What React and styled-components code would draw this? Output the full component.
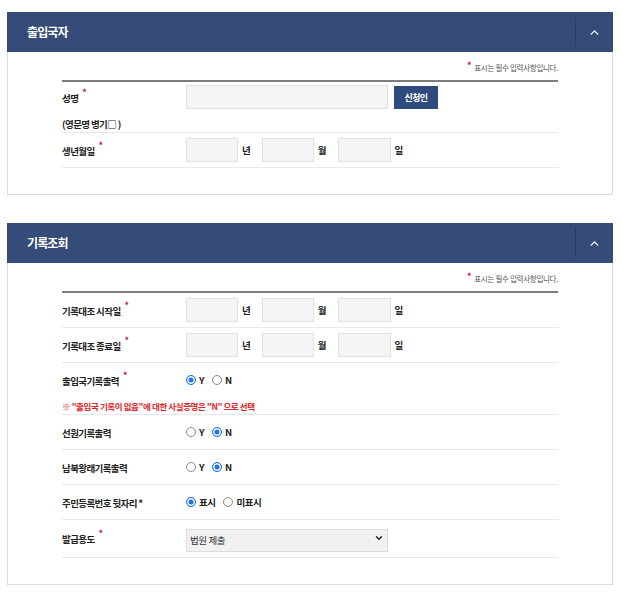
import React from "react";
import styled, { createGlobalStyle } from "styled-components";
import { ChevronUp, ChevronDown } from "lucide-react";

const GlobalStyle = createGlobalStyle`
  * { box-sizing: border-box; }
  html, body { margin: 0; padding: 0; background: #fff; }
  body {
    font-family: "Noto Sans CJK KR", "Noto Sans", sans-serif;
    color: #333;
  }
`;

const Page = styled.div`
  padding: 12px 9px 0 7px;
  display: flex;
  flex-direction: column;
  gap: 28px;
`;

const Panel = styled.section`
  width: 606px;
`;

const Header = styled.div`
  height: 40px;
  background: #354b78;
  display: flex;
  align-items: center;
  justify-content: space-between;
`;

const Title = styled.h2`
  margin: 0;
  padding-left: 20px;
  font-size: 12px;
  font-weight: 700;
  color: #fff;
  letter-spacing: -0.9px;
  line-height: 1;
`;

const Toggle = styled.button`
  width: 38px;
  height: 30px;
  border: none;
  border-left: 1px solid rgba(0, 0, 0, 0.16);
  background: transparent;
  display: flex;
  align-items: center;
  justify-content: center;
  color: #fff;
  padding: 0;
  cursor: pointer;
`;

const Body = styled.div`
  border: 1px solid #dcdcdc;
  border-top: none;
  padding: 4px 54px 26px;
`;

const Note = styled.p`
  margin: 0 0 4px;
  height: 20px;
  line-height: 20px;
  text-align: right;
  font-size: 7.5px;
  color: #555;
  letter-spacing: -0.3px;
`;

const NoteMark = styled.span`
  color: #c8102e;
  font-size: 9px;
  font-weight: 700;
  vertical-align: 2px;
  margin-right: 3px;
`;

const Table = styled.div`
  border-top: 2px solid #7d7d7d;
`;

const Row = styled.div`
  display: grid;
  grid-template-columns: 124px 1fr;
  align-items: center;
  padding: 5px 0;
  min-height: 35px;
  border-bottom: 1px solid #e9e9e9;
`;

const NameRow = styled(Row)`
  grid-template-rows: 24px 23px;
  padding: 3px 0 0;
  min-height: 51px;
`;

const NoticeRow = styled(Row)`
  grid-template-rows: 24px auto;
  padding-bottom: 0;
`;

const Label = styled.div`
  font-size: 9.5px;
  font-weight: 700;
  letter-spacing: -0.6px;
  color: #222;
  line-height: 16px;
  padding-top: 2px;
  white-space: nowrap;
`;

const SubLabel = styled(Label)`
  grid-column: 1 / -1;
  align-self: end;
  padding-top: 0;
`;

const Req = styled.span`
  color: #c8102e;
  font-size: 9px;
  margin-left: 4px;
  vertical-align: 6px;
  line-height: 0;
`;

const Field = styled.div`
  display: flex;
  align-items: center;
`;

const TextInput = styled.input`
  width: ${(p) => p.$w}px;
  height: 24px;
  border: 1px solid #e1e1e1;
  background: #f5f5f5;
  padding: 0 6px;
  font-family: inherit;
  font-size: 9px;
  outline: none;
`;

const SmallButton = styled.button`
  margin-left: 6px;
  width: 44px;
  height: 23px;
  background: #2f4a7c;
  color: #fff;
  border: none;
  font-family: inherit;
  font-size: 9px;
  font-weight: 700;
  letter-spacing: -0.6px;
  padding: 0;
  cursor: pointer;
`;

const Unit = styled.span`
  margin: 0 11px 0 4px;
  font-size: 9.5px;
  font-weight: 700;
  color: #222;
`;

const RadioGroup = styled.div`
  display: flex;
  align-items: center;
  gap: 8px;
`;

const RadioLabel = styled.label`
  display: inline-flex;
  align-items: center;
  gap: 3px;
  font-size: 9.5px;
  font-weight: 700;
  letter-spacing: -0.5px;
  color: #222;
  cursor: pointer;
`;

const RadioInput = styled.input.attrs({ type: "radio" })`
  appearance: none;
  margin: 0;
  width: 10px;
  height: 10px;
  border-radius: 50%;
  border: 1px solid #8a8a8a;
  background: #fff;
  &:checked {
    border-color: #1a73e8;
    background: #1a73e8;
    box-shadow: inset 0 0 0 1.5px #fff;
  }
`;

const SelectWrap = styled.div`
  position: relative;
  width: 202px;
`;

const Select = styled.select`
  appearance: none;
  width: 100%;
  height: 23px;
  border: 1px solid #dcdcdc;
  background: #f1f1f1;
  font-family: inherit;
  font-size: 9.5px;
  letter-spacing: -0.4px;
  color: #333;
  padding: 0 20px 0 3px;
  outline: none;
`;

const SelectIcon = styled(ChevronDown)`
  position: absolute;
  right: 4px;
  top: 50%;
  transform: translateY(-50%);
  pointer-events: none;
`;

const Notice = styled.p`
  grid-column: 1 / -1;
  margin: 6px 0 0;
  font-size: 8.5px;
  font-weight: 700;
  color: #e0262b;
  line-height: 16px;
  letter-spacing: -0.4px;
`;

function PanelHeader({ title }) {
  return (
    <Header>
      <Title>{title}</Title>
      <Toggle aria-label="접기">
        <ChevronUp size={13} strokeWidth={2.4} />
      </Toggle>
    </Header>
  );
}

function RequiredNote() {
  return (
    <Note>
      <NoteMark>*</NoteMark>표시는 필수 입력사항입니다.
    </Note>
  );
}

function DateFields() {
  return (
    <Field>
      <TextInput $w={52} />
      <Unit>년</Unit>
      <TextInput $w={52} />
      <Unit>월</Unit>
      <TextInput $w={53} />
      <Unit>일</Unit>
    </Field>
  );
}

function Radios({ name, options, checked }) {
  return (
    <RadioGroup>
      {options.map((o) => (
        <RadioLabel key={o}>
          <RadioInput name={name} defaultChecked={o === checked} />
          {o}
        </RadioLabel>
      ))}
    </RadioGroup>
  );
}

export default function App() {
  return (
    <>
      <GlobalStyle />
      <Page>
        <Panel>
          <PanelHeader title="출입국자" />
          <Body>
            <RequiredNote />
            <Table>
              <NameRow>
                <Label>
                  성명<Req>*</Req>
                </Label>
                <Field>
                  <TextInput $w={202} />
                  <SmallButton>신청인</SmallButton>
                </Field>
                <SubLabel>(영문명 병기□ )</SubLabel>
              </NameRow>
              <Row>
                <Label>
                  생년월일<Req>*</Req>
                </Label>
                <DateFields />
              </Row>
            </Table>
          </Body>
        </Panel>

        <Panel>
          <PanelHeader title="기록조회" />
          <Body>
            <RequiredNote />
            <Table>
              <Row>
                <Label>
                  기록대조 시작일<Req>*</Req>
                </Label>
                <DateFields />
              </Row>
              <Row>
                <Label>
                  기록대조 종료일<Req>*</Req>
                </Label>
                <DateFields />
              </Row>
              <NoticeRow>
                <Label>
                  출입국기록출력<Req>*</Req>
                </Label>
                <Radios name="immig" options={["Y", "N"]} checked="Y" />
                <Notice>※ "출입국 기록이 없음"에 대한 사실증명은 "N" 으로 선택</Notice>
              </NoticeRow>
              <Row>
                <Label>선원기록출력</Label>
                <Radios name="seaman" options={["Y", "N"]} checked="N" />
              </Row>
              <Row>
                <Label>남북왕래기록출력</Label>
                <Radios name="nk" options={["Y", "N"]} checked="N" />
              </Row>
              <Row>
                <Label>주민등록번호 뒷자리 *</Label>
                <Radios name="rrn" options={["표시", "미표시"]} checked="표시" />
              </Row>
              <Row>
                <Label>
                  발급용도<Req>*</Req>
                </Label>
                <SelectWrap>
                  <Select defaultValue="court">
                    <option value="court">법원 제출</option>
                  </Select>
                  <SelectIcon size={10} strokeWidth={3.5} color="#222" />
                </SelectWrap>
              </Row>
            </Table>
          </Body>
        </Panel>
      </Page>
    </>
  );
}
